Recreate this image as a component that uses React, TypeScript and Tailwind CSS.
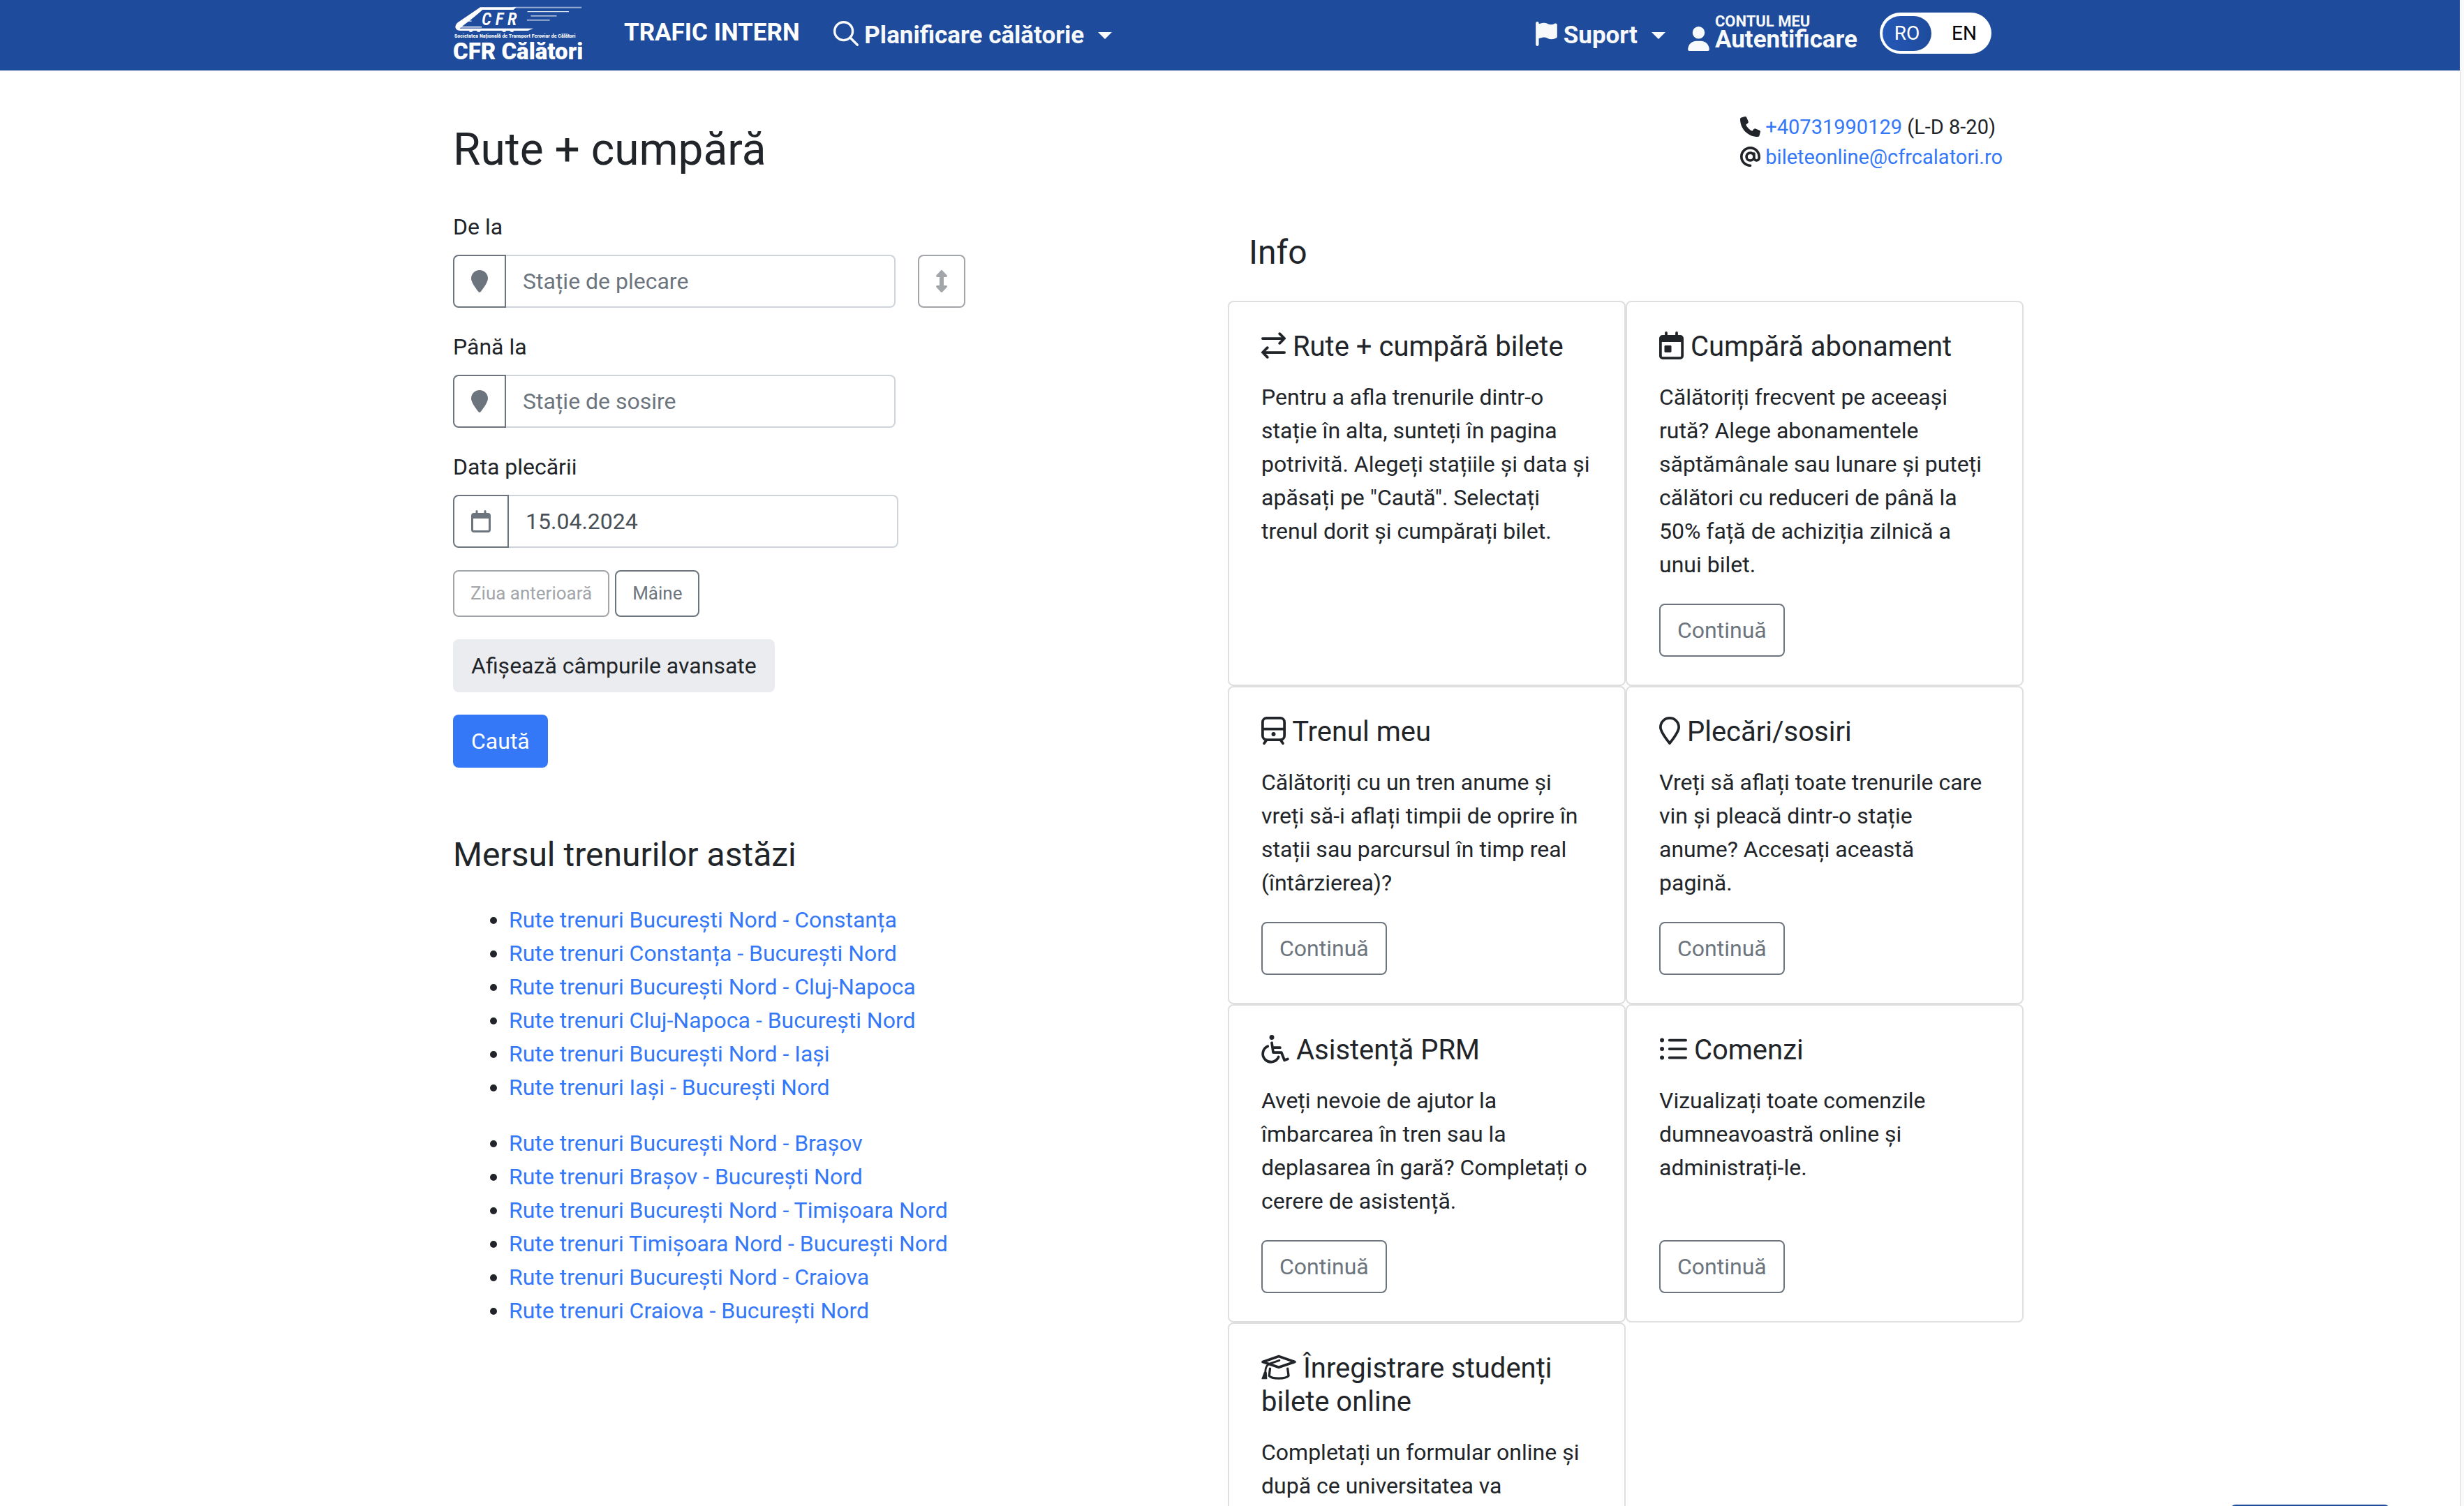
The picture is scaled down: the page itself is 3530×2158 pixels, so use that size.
import React, { ReactNode } from "react";
import { FaAt, FaFlag, FaLocationPin, FaPhone, FaUpDown, FaUser } from "react-icons/fa6";

/* ---------- line icons ---------- */

function Glyph({ box, className, children }: { box: string; className: string; children: ReactNode }) {
  return (
    <svg
      viewBox={box}
      className={"inline-block overflow-visible align-[-0.125em] " + className}
      fill="none"
      stroke="currentColor"
      strokeWidth={48}
      strokeLinecap="round"
      strokeLinejoin="round"
      aria-hidden="true"
    >
      {children}
    </svg>
  );
}

const SearchIcon = () => (
  <Glyph box="0 0 512 512" className="h-9 w-9">
    <circle cx="208" cy="208" r="184" />
    <path d="M342 342L488 488" />
  </Glyph>
);

const SwapIcon = () => (
  <Glyph box="0 0 448 512" className="h-10 w-[35px]">
    <path d="M24 128H420M336 40l88 88-88 88M424 384H28M112 296l-88 88 88 88" />
  </Glyph>
);

function CalendarShape({ day }: { day?: boolean }) {
  return (
    <>
      <path d="M128 24V88M320 24V88" />
      <path
        d="M64 64H384a64 64 0 0 1 64 64V448a64 64 0 0 1-64 64H64a64 64 0 0 1-64-64V128A64 64 0 0 1 64 64ZM48 192V448a16 16 0 0 0 16 16H384a16 16 0 0 0 16-16V192Z"
        fill="currentColor"
        fillRule="evenodd"
        stroke="none"
      />
      {day && <rect x="96" y="256" width="128" height="128" rx="18" fill="currentColor" stroke="none" />}
    </>
  );
}

const CalendarDayIcon = () => (
  <Glyph box="0 0 448 512" className="h-10 w-[35px]">
    <CalendarShape day />
  </Glyph>
);

const TrainIcon = () => (
  <Glyph box="0 0 448 512" className="h-10 w-[35px]">
    <rect x="24" y="24" width="400" height="400" rx="76" />
    <path d="M24 224H424M96 428L52 488M352 428L396 488" />
    <circle cx="224" cy="320" r="38" fill="currentColor" stroke="none" />
  </Glyph>
);

const PinIcon = () => (
  <Glyph box="0 0 384 512" className="h-10 w-[30px]">
    <path d="M360 192c0 70-95 204-168 296C119 396 24 262 24 192a168 168 0 0 1 336 0Z" />
  </Glyph>
);

const WheelchairIcon = () => (
  <Glyph box="0 0 512 512" className="h-10 w-10">
    <circle cx="192" cy="44" r="44" fill="currentColor" stroke="none" />
    <path d="M192 144L218 320H368L424 464L484 442M206 232H344" />
    <path d="M118 208A150 150 0 1 0 316 404" />
  </Glyph>
);

const ListIcon = () => (
  <Glyph box="0 0 512 512" className="h-10 w-10">
    <path d="M188 96H488M188 256H488M188 416H488" />
    <g fill="currentColor" stroke="none">
      <circle cx="52" cy="96" r="38" />
      <circle cx="52" cy="256" r="38" />
      <circle cx="52" cy="416" r="38" />
    </g>
  </Glyph>
);

const GraduationIcon = () => (
  <Glyph box="0 0 640 512" className="h-10 w-[50px]">
    <path d="M26 160L320 58L614 160L320 260Z" />
    <path d="M332 132L160 190Q76 220 74 340" strokeWidth={36} />
    <path d="M160 282L144 416Q180 462 320 462T500 416L482 282" strokeWidth={42} />
    <path d="M56 350H92L100 470H12Z" fill="currentColor" strokeWidth={14} />
  </Glyph>
);

const Caret = () => (
  <svg viewBox="0 0 20 10" className="h-[10px] w-5" fill="currentColor" aria-hidden="true">
    <path d="M0 0H20L10 10Z" />
  </svg>
);

/* ---------- header ---------- */

function Logo() {
  return (
    <a href="#" className="flex w-[186px] flex-col pt-[9px] text-white">
      <svg viewBox="30 28 558 112" className="h-[37px] w-full" aria-hidden="true">
        <path d="M290 30H585V36H280Z" fill="#fff" opacity=".55" />
        <path d="M146 32H302L290 43H156C120 74 92 96 66 116C52 126 56 124 74 124H376L352 134H60C34 134 32 112 48 98Z" fill="#fff" />
        <path d="M84 92H108M50 118H152" stroke="#fff" strokeWidth="4" />
        <path d="M350 51H530M365 70H477M348 88H447" stroke="#fff" strokeWidth="4" opacity=".85" />
        <path d="M96 134h18l-4 5h-10zM130 134h18l-4 5h-10zM240 134h18l-4 5h-10zM274 134h18l-4 5h-10z" fill="#fff" />
        <text x="152" y="110" fill="#fff" fontSize="76" fontStyle="italic" fontWeight="600" fontFamily="'Roboto Condensed', Roboto, sans-serif">
          C F R
        </text>
      </svg>
      <span className="whitespace-nowrap pl-0.5 font-['Roboto_Condensed',Roboto,sans-serif] text-[8px] font-bold leading-[12px]">
        Societatea Națională de Transport Feroviar de Călători
      </span>
      <span className="whitespace-nowrap text-[33px] font-black leading-8">CFR Călători</span>
    </a>
  );
}

function Header() {
  return (
    <header className="h-[101px] bg-[#1e4b9b] pr-1.5 text-[#f8f9fa]">
      <div className="mx-auto flex h-full max-w-[2280px] items-center pl-[30px] pr-[46px] text-[35px] font-bold leading-[52px]">
        <div className="self-start">
          <Logo />
        </div>
        <nav className="ml-[59px] flex items-center gap-12">
          <a href="#" className="pb-2 text-white">TRAFIC INTERN</a>
          <button type="button" className="flex items-center gap-5">
            <span>
              <SearchIcon /> Planificare călătorie
            </span>
            <Caret />
          </button>
        </nav>
        <div className="ml-auto flex items-center gap-8">
          <button type="button" className="flex items-center gap-5">
            <span>
              <FaFlag className="inline-block h-[35px] w-[31px] align-[-0.125em]" /> Suport
            </span>
            <Caret />
          </button>
          <a href="#" className="flex items-end gap-2 pb-[3px]">
            <FaUser className="mb-0.5 h-[35px] w-[31px]" />
            <span className="flex flex-col">
              <span className="text-[22px] leading-4">CONTUL MEU</span>
              <span className="leading-9">Autentificare</span>
            </span>
          </a>
          <div className="mb-1.5 flex h-[59px] w-40 items-center rounded-full bg-white px-1 text-[28px] font-normal leading-8">
            <button type="button" className="h-[50px] w-[70px] rounded-full bg-linear-to-r from-[#2558b8] to-[#1e4b9b] text-white">
              RO
            </button>
            <button type="button" className="h-[50px] flex-1 pl-3 text-black">EN</button>
          </div>
        </div>
      </div>
    </header>
  );
}

/* ---------- search form ---------- */

function Field({ id, label, icon, children, ...input }: { id: string; label: string; icon: ReactNode; children?: ReactNode; placeholder?: string; defaultValue?: string }) {
  return (
    <div>
      <label htmlFor={id} className="block">{label}</label>
      <div className="mt-4 flex h-[76px]">
        <span className="flex items-center rounded-l-lg border-2 border-[#6c757d] px-6 text-[#6c757d]">{icon}</span>
        <input
          id={id}
          type="text"
          className="w-[558px] rounded-r-lg border-2 border-l-0 border-[#ced4da] px-6 text-[#495057] placeholder:text-[#6c757d] placeholder:opacity-100"
          {...input}
        />
        {children}
      </div>
    </div>
  );
}

function SearchForm() {
  const pin = <FaLocationPin className="h-8 w-6" />;
  return (
    <form className="mt-12 flex flex-col items-start gap-8" onSubmit={(e) => e.preventDefault()}>
      <Field id="from" label="De la" placeholder="Stație de plecare" icon={pin}>
        <button
          type="button"
          aria-label="Inversează stațiile"
          className="ml-8 flex items-center rounded-lg border-2 border-[#a2a5a9] px-6 text-[#a2a5a9]"
        >
          <FaUpDown className="h-8 w-4" />
        </button>
      </Field>
      <Field id="to" label="Până la" placeholder="Stație de sosire" icon={pin} />
      <Field
        id="date"
        label="Data plecării"
        defaultValue="15.04.2024"
        icon={
          <Glyph box="0 0 448 512" className="h-8 w-7">
            <CalendarShape />
          </Glyph>
        }
      />
      <div className="flex gap-2 text-[26px] leading-[39px]">
        <button type="button" disabled className="rounded-lg border-2 border-[#a2a5a9] px-[23px] py-3 text-[#a2a5a9]">Ziua anterioară</button>
        <button type="button" className="rounded-lg border-2 border-[#6c757d] px-[23px] py-3 text-[#6c757d]">Mâine</button>
      </div>
      <button type="button" className="h-[76px] rounded-lg bg-[#ebecef] px-[26px]">Afișează câmpurile avansate</button>
      <button type="submit" className="h-[76px] rounded-lg bg-[#3478f7] px-[26px] text-white">Caută</button>
    </form>
  );
}

/* ---------- routes ---------- */

const routes = [
  [
    "București Nord - Constanța",
    "Constanța - București Nord",
    "București Nord - Cluj-Napoca",
    "Cluj-Napoca - București Nord",
    "București Nord - Iași",
    "Iași - București Nord",
  ],
  [
    "București Nord - Brașov",
    "Brașov - București Nord",
    "București Nord - Timișoara Nord",
    "Timișoara Nord - București Nord",
    "București Nord - Craiova",
    "Craiova - București Nord",
  ],
];

/* ---------- info cards ---------- */

const cards: { title: string; text: string; icon: ReactNode; action?: boolean }[] = [
  {
    title: "Rute + cumpără bilete",
    text: 'Pentru a afla trenurile dintr-o stație în alta, sunteți în pagina potrivită. Alegeți stațiile și data și apăsați pe "Caută". Selectați trenul dorit și cumpărați bilet.',
    icon: <SwapIcon />,
  },
  {
    title: "Cumpără abonament",
    text: "Călătoriți frecvent pe aceeași rută? Alege abonamentele săptămânale sau lunare și puteți călători cu reduceri de până la 50% față de achiziția zilnică a unui bilet.",
    icon: <CalendarDayIcon />,
    action: true,
  },
  {
    title: "Trenul meu",
    text: "Călătoriți cu un tren anume și vreți să-i aflați timpii de oprire în stații sau parcursul în timp real (întârzierea)?",
    icon: <TrainIcon />,
    action: true,
  },
  {
    title: "Plecări/sosiri",
    text: "Vreți să aflați toate trenurile care vin și pleacă dintr-o stație anume? Accesați această pagină.",
    icon: <PinIcon />,
    action: true,
  },
  {
    title: "Asistență PRM",
    text: "Aveți nevoie de ajutor la îmbarcarea în tren sau la deplasarea în gară? Completați o cerere de asistență.",
    icon: <WheelchairIcon />,
    action: true,
  },
  {
    title: "Comenzi",
    text: "Vizualizați toate comenzile dumneavoastră online și administrați-le.",
    icon: <ListIcon />,
    action: true,
  },
  {
    title: "Înregistrare studenți bilete online",
    text: "Completați un formular online și după ce universitatea va",
    icon: <GraduationIcon />,
  },
];

export default function App() {
  return (
    <div className="flex h-screen overflow-hidden bg-white font-[Roboto,sans-serif] text-[32px] leading-[48px] text-[#212529]">
      <div className="min-w-0 flex-1">
        <Header />
        <div className="pr-1.5">
          <main className="mx-auto grid max-w-[2280px] grid-cols-2">
            <div className="px-[30px] pt-[75px]">
              <h1 className="text-[64px] leading-[77px]">Rute + cumpără</h1>
              <SearchForm />
              <h2 className="mt-24 text-[48px] leading-[58px]">Mersul trenurilor astăzi</h2>
              <div className="mt-10 flex flex-col gap-8">
                {routes.map((group) => (
                  <ul key={group[0]} className="list-disc pl-20">
                    {group.map((route) => (
                      <li key={route}>
                        <a href="#" className="text-[#3478f7]">Rute trenuri {route}</a>
                      </li>
                    ))}
                  </ul>
                ))}
              </div>
            </div>
            <div className="pt-[60px]">
              <address className="ml-auto w-fit pr-[30px] text-[29px] not-italic leading-[43px]">
                <p>
                  <FaPhone className="inline-block align-[-0.125em]" />{" "}
                  <a href="tel:+40731990129" className="text-[#3478f7]">+40731990129</a> (L-D 8-20)
                </p>
                <p>
                  <FaAt className="inline-block align-[-0.125em]" />{" "}
                  <a href="mailto:bileteonline@cfrcalatori.ro" className="text-[#3478f7]">bileteonline@cfrcalatori.ro</a>
                </p>
              </address>
              <h2 className="mt-[86px] pl-[30px] text-[48px] leading-[58px]">Info</h2>
              <div className="mt-10 grid grid-cols-2">
                {cards.map((card) => (
                  <article key={card.title} className="flex flex-col items-start rounded-lg border-2 border-[#dfdfdf] px-[46px] py-10">
                    <h3 className="text-[40px] leading-[48px]">
                      {card.icon} {card.title}
                    </h3>
                    <p className="mb-8 mt-6">{card.text}</p>
                    {card.action && (
                      <button type="button" className="mt-auto h-[76px] rounded-lg border-2 border-[#6c757d] px-6 text-[#6c757d]">
                        Continuă
                      </button>
                    )}
                  </article>
                ))}
              </div>
            </div>
          </main>
        </div>
      </div>
      <div className="flex w-1.5 flex-col bg-[#fafafa]">
        <div className="h-[101px]" />
        <div className="flex-1 border-l-2 border-[#e8e8e8]" />
      </div>
      <div className="fixed -bottom-[70px] right-[106px] h-[72px] w-[229px] rounded-lg bg-[#1e4b9b]" />
    </div>
  );
}
